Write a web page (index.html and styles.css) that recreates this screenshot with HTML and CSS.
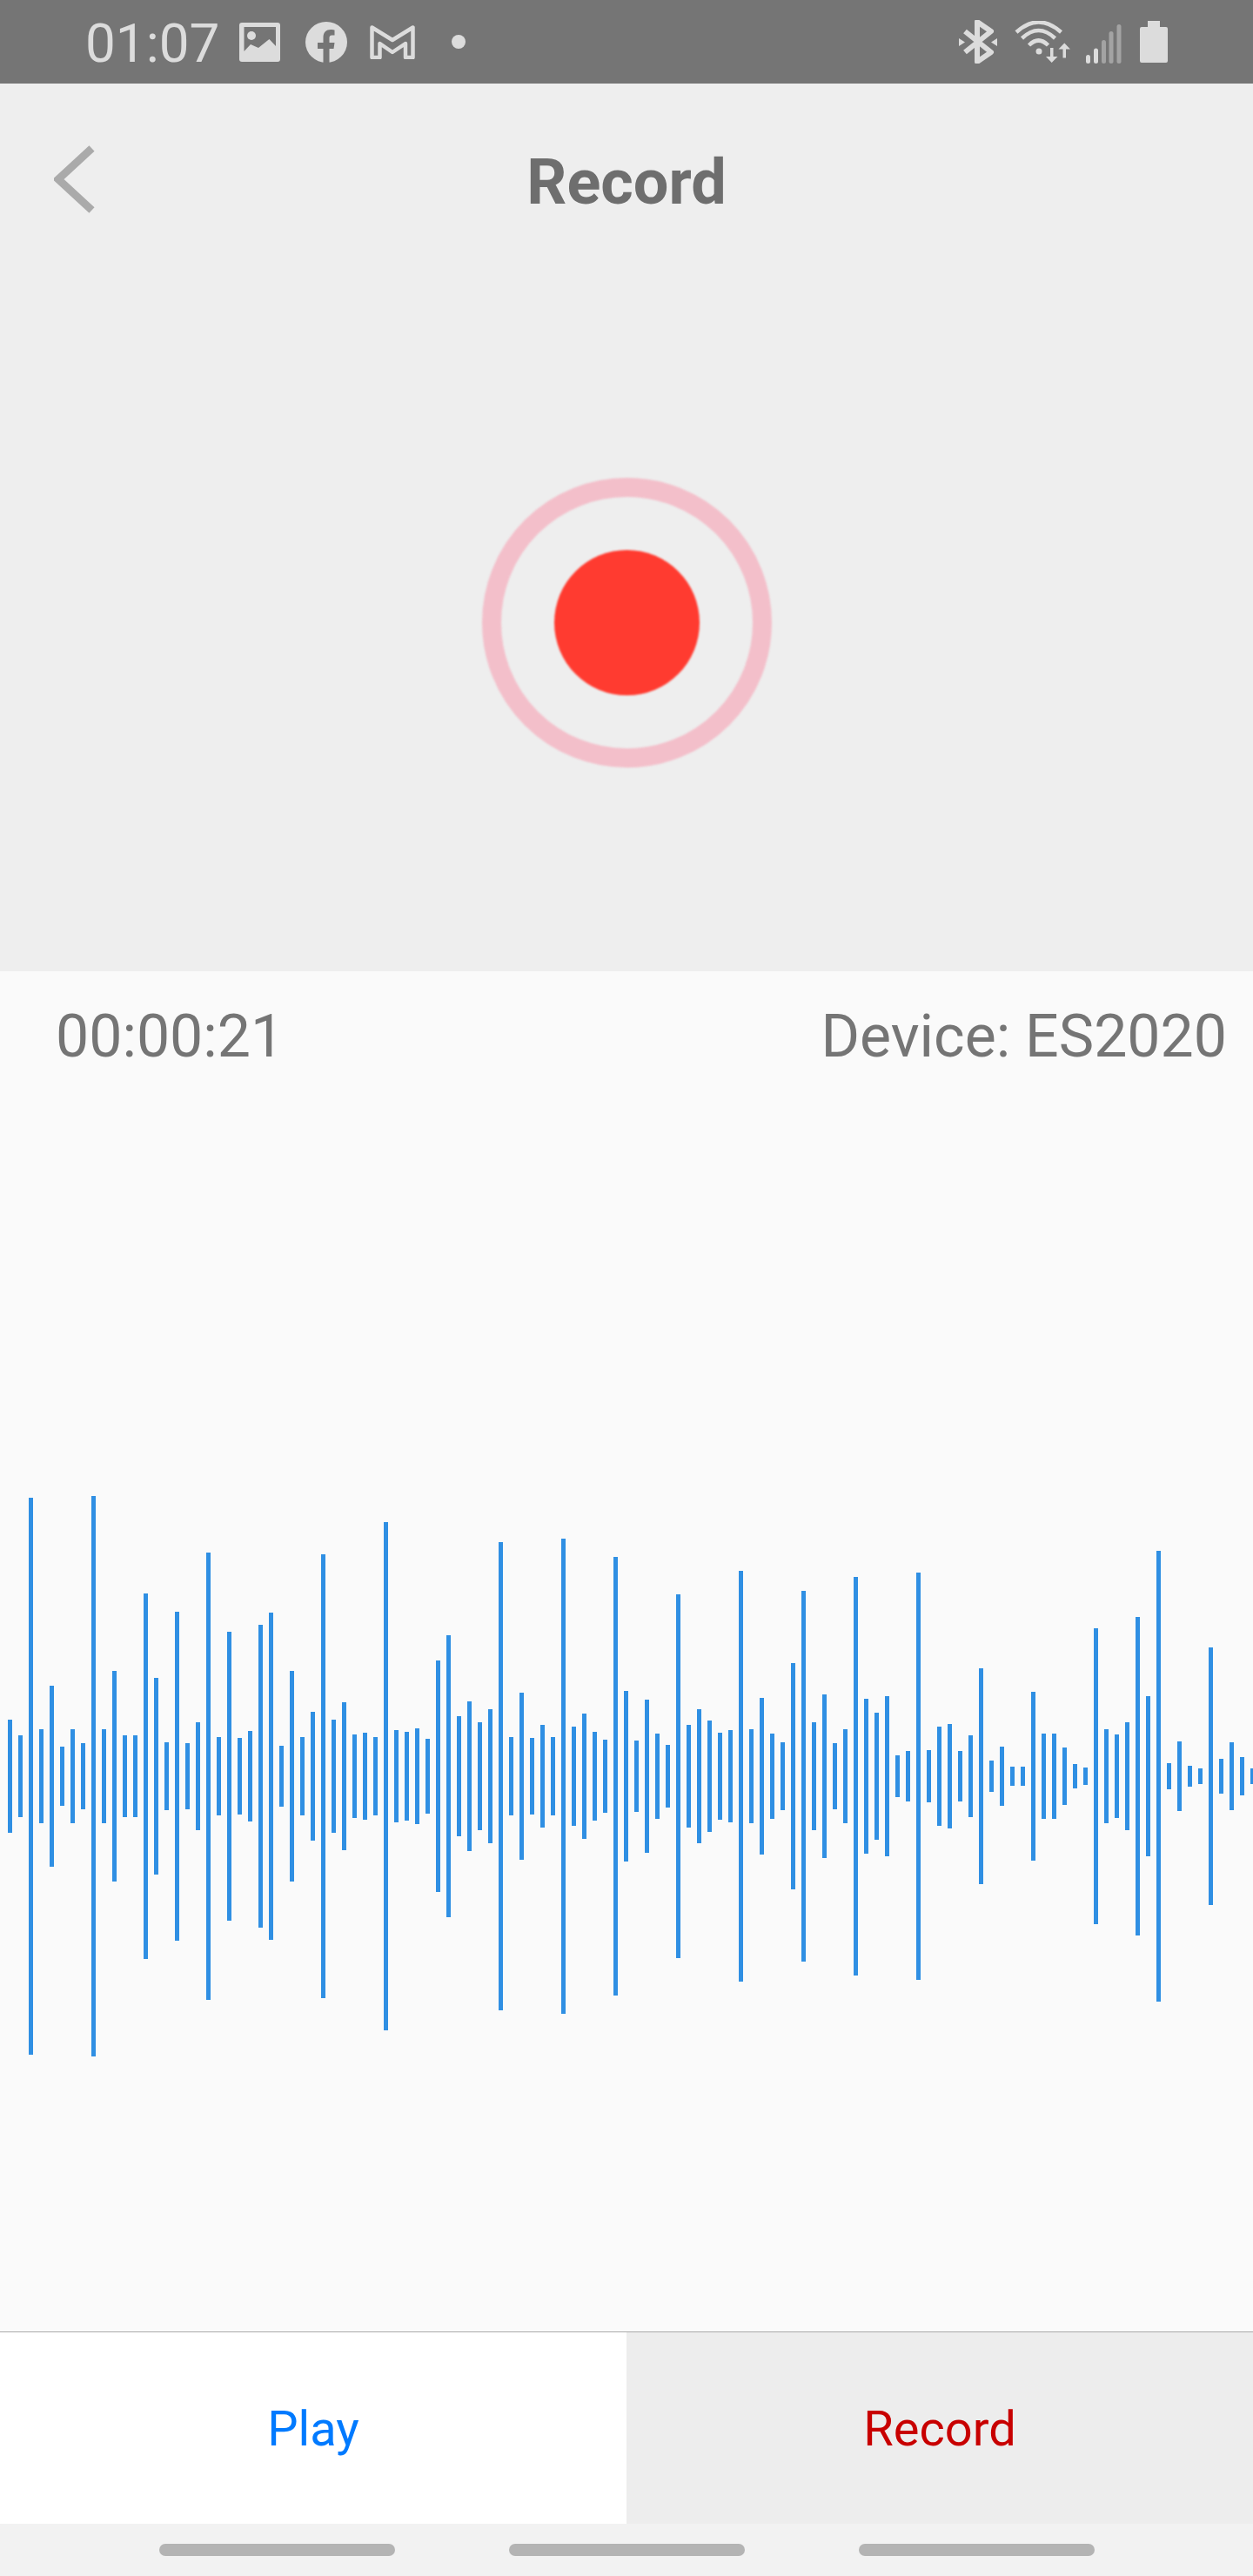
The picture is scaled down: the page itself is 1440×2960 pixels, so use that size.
FILE: index.html
```html
<!DOCTYPE html>
<html lang="en">
<head>
<meta charset="utf-8">
<title>Record</title>
<link rel="stylesheet" href="styles.css">
</head>
<body>
<div class="app">
  <div class="status">
    <div class="status-left">
      <span class="clock">01:07</span>
      <svg class="ic-image" width="47" height="45" viewBox="0 0 47 45"><rect width="47" height="45" rx="3" fill="#dcdcdc"/><path d="M5.5 5H42V27L34.4 19 22 29 13 25 5.5 33Z" fill="#757575"/><circle cx="14" cy="15" r="5" fill="#dcdcdc"/></svg>
      <svg class="ic-fb" width="48" height="47" viewBox="0 0 48 47"><ellipse cx="24" cy="23.5" rx="24" ry="23.5" fill="#dcdcdc"/><path d="M20.5 47V31H14V24H20.5V18C20.5 12 24 9 29 9C31 9 33.5 9.5 33.5 9.5V15.5H30.5C28 15.5 27.5 17 27.5 18.5V24H33.5L32.5 31H27.5V47Z" fill="#757575"/></svg>
      <svg class="ic-mail" width="52" height="40" viewBox="0 0 52 40"><path d="M2.5 38V3.500L26 18 49.5 3.500V38H41V22L26 32 11.5 22V38Z" fill="none" stroke="#dcdcdc" stroke-width="4.500" stroke-linejoin="round"/></svg>
      <span class="dot"></span>
    </div>
    <div class="status-right">
      <svg width="45" height="50" viewBox="0 0 45 50"><path d="M8 13L38 37 22 48V2L38 13 8 37" fill="none" stroke="#dcdcdc" stroke-width="6" stroke-linejoin="round"/><path d="M1 21L8 25.5 1 30ZM45 21L38 25.5 45 30Z" fill="#dcdcdc"/></svg>
      <svg width="66" height="48" viewBox="0 0 66 48"><g fill="none" stroke="#dcdcdc" stroke-width="4.5"><path d="M2 13Q27.5-10 53.5 13"/><path d="M8.5 20Q27.5 2 46.5 20"/><path d="M16.5 28Q27.5 17 38.5 28"/></g><circle cx="28" cy="35" r="3.5" fill="#dcdcdc"/><path d="M41 31H44.5V41H49.5L42.7 48 36 41H41ZM55.5 42.5H59V32.500H64L57.300 25.500 50.500 32.500H55.500Z" fill="#dcdcdc"/></svg>
      <svg width="41" height="45" viewBox="0 0 41 45"><rect x="0" y="35" width="5" height="10" rx="2.500" fill="#dcdcdc"/><rect x="9" y="27.500" width="5" height="17.500" rx="2.500" fill="#dcdcdc"/><rect x="18" y="18" width="5" height="27" rx="2.500" fill="#a3a3a3"/><rect x="26.500" y="8" width="5" height="37" rx="2.500" fill="#a3a3a3"/><rect x="35.500" y="0" width="5" height="45" rx="2.500" fill="#a3a3a3"/></svg>
      <svg width="32" height="48" viewBox="0 0 32 48"><path d="M9 0H23V7H30Q32 7 32 9V46Q32 48 30 48H2Q0 48 0 46V9Q0 7 2 7H9Z" fill="#dcdcdc"/></svg>
    </div>
  </div>

  <section class="hero">
    <header class="topbar">
      <svg class="back" width="47" height="78" viewBox="0 0 47 78"><path d="M43.500 3.500L5 39 43.500 74.500" fill="none" stroke="#aaaaaa" stroke-width="9"/></svg>
      <h1 class="title">Record</h1>
      <span></span>
    </header>
    <div class="rec-ring"><span class="rec-dot"></span></div>
  </section>

  <section class="panel">
    <div class="meta"><span>00:00:21</span><span>Device: ES2020</span></div>
    <div class="wave">
      <i style="height:130px"></i><i style="height:94px"></i><i style="height:640px"></i><i style="height:108px"></i><i style="height:208px"></i><i style="height:68px"></i><i style="height:108px"></i><i style="height:76px"></i><i style="height:644px"></i><i style="height:108px"></i>
      <i style="height:242px"></i><i style="height:94px"></i><i style="height:94px"></i><i style="height:420px"></i><i style="height:226px"></i><i style="height:78px"></i><i style="height:378px"></i><i style="height:76px"></i><i style="height:124px"></i><i style="height:514px"></i>
      <i style="height:90px"></i><i style="height:332px"></i><i style="height:88px"></i><i style="height:104px"></i><i style="height:348px"></i><i style="height:376px"></i><i style="height:70px"></i><i style="height:242px"></i><i style="height:90px"></i><i style="height:148px"></i>
      <i style="height:510px"></i><i style="height:130px"></i><i style="height:170px"></i><i style="height:96px"></i><i style="height:100px"></i><i style="height:90px"></i><i style="height:584px"></i><i style="height:106px"></i><i style="height:102px"></i><i style="height:110px"></i>
      <i style="height:86px"></i><i style="height:266px"></i><i style="height:324px"></i><i style="height:138px"></i><i style="height:172px"></i><i style="height:124px"></i><i style="height:154px"></i><i style="height:538px"></i><i style="height:90px"></i><i style="height:192px"></i>
      <i style="height:88px"></i><i style="height:118px"></i><i style="height:90px"></i><i style="height:546px"></i><i style="height:114px"></i><i style="height:144px"></i><i style="height:102px"></i><i style="height:84px"></i><i style="height:504px"></i><i style="height:196px"></i>
      <i style="height:82px"></i><i style="height:176px"></i><i style="height:98px"></i><i style="height:72px"></i><i style="height:418px"></i><i style="height:118px"></i><i style="height:154px"></i><i style="height:128px"></i><i style="height:100px"></i><i style="height:106px"></i>
      <i style="height:472px"></i><i style="height:108px"></i><i style="height:180px"></i><i style="height:98px"></i><i style="height:78px"></i><i style="height:260px"></i><i style="height:426px"></i><i style="height:124px"></i><i style="height:188px"></i><i style="height:76px"></i>
      <i style="height:108px"></i><i style="height:458px"></i><i style="height:178px"></i><i style="height:146px"></i><i style="height:184px"></i><i style="height:48px"></i><i style="height:58px"></i><i style="height:468px"></i><i style="height:60px"></i><i style="height:114px"></i>
      <i style="height:120px"></i><i style="height:58px"></i><i style="height:94px"></i><i style="height:248px"></i><i style="height:36px"></i><i style="height:68px"></i><i style="height:22px"></i><i style="height:22px"></i><i style="height:194px"></i><i style="height:98px"></i>
      <i style="height:98px"></i><i style="height:66px"></i><i style="height:28px"></i><i style="height:20px"></i><i style="height:340px"></i><i style="height:108px"></i><i style="height:96px"></i><i style="height:124px"></i><i style="height:366px"></i><i style="height:184px"></i>
      <i style="height:518px"></i><i style="height:30px"></i><i style="height:80px"></i><i style="height:24px"></i><i style="height:18px"></i><i style="height:296px"></i><i style="height:40px"></i><i style="height:78px"></i><i style="height:44px"></i><i style="height:18px"></i>
    </div>
  </section>

  <div class="actions">
    <button class="action play">Play</button>
    <button class="action record">Record</button>
  </div>

  <nav class="navbar"><span></span><span></span><span></span></nav>
</div>
</body>
</html>
```
FILE: styles.css
```css
* { box-sizing: border-box; }
html, body { margin: 0; padding: 0; }
body { font-family: Roboto, "Liberation Sans", sans-serif; background: #f2f2f2; }

.app { width: 1440px; height: 2960px; display: flex; flex-direction: column; overflow: hidden; }

.status { height: 96px; flex: none; background: #757575; display: flex; justify-content: space-between; align-items: center; padding: 0 98px 0 98px; }
.status svg { display: block; flex: none; }
.status-left { display: flex; align-items: center; }
.status-right { display: flex; align-items: center; }
.status-right svg:nth-child(2) { margin-left: 20px; }
.status-right svg:nth-child(3) { margin-left: 16px; margin-top: 5px; }
.status-right svg:nth-child(4) { margin-left: 21px; }
.clock { width: 149px; font-size: 62px; font-weight: 400; line-height: 1; color: #dcdcdc; white-space: nowrap; padding-top: 3px; }
.ic-image { margin-left: 28px; }
.ic-fb { margin-left: 29px; }
.ic-mail { margin-left: 26px; }
.dot { width: 16px; height: 16px; border-radius: 50%; background: #dcdcdc; margin-left: 42px; }

.hero { height: 1020px; flex: none; background: #eeeeee; display: flex; flex-direction: column; align-items: center; }
.topbar { width: 100%; height: 220px; display: grid; grid-template-columns: 1fr auto 1fr; align-items: center; padding: 0 62px; }
.back { display: block; }
.title { margin: 0; font-size: 72px; font-weight: 700; line-height: 1; color: #6e6e6e; padding-top: 8px; }
.rec-ring { width: 333px; height: 333px; margin-top: 233px; border: 22px solid #f3bfca; border-radius: 50%; display: flex; align-items: center; justify-content: center; filter: blur(1px); }
.rec-dot { flex: none; width: 167px; height: 167px; border-radius: 50%; background: #ff3b30; }

.panel { height: 1563px; flex: none; background: #fafafa; display: flex; flex-direction: column; }
.meta { height: 150px; flex: none; display: flex; justify-content: space-between; align-items: center; padding: 0 30px 0 64px; font-size: 68px; color: #757575; }
.wave { flex: 1; display: flex; align-items: center; gap: 7px; padding: 137px 0 0 9px; overflow: hidden; }
.wave i { display: block; flex: none; width: 5px; background: #2f8fe3; }

.actions { height: 221px; flex: none; display: flex; border-top: 1px solid #aaaaaa; }
.action { flex: 1; border: 0; padding: 2px 0 0; margin: 0; font-family: inherit; font-size: 56px; }
.play { background: #ffffff; color: #007aff; }
.record { background: #ededed; color: #c80000; }

.navbar { flex: 1; display: flex; justify-content: center; align-items: center; gap: 131px; background: #f2f2f2; }
.navbar span { width: 271px; height: 14px; border-radius: 7px; background: #b4b4b4; }
```
